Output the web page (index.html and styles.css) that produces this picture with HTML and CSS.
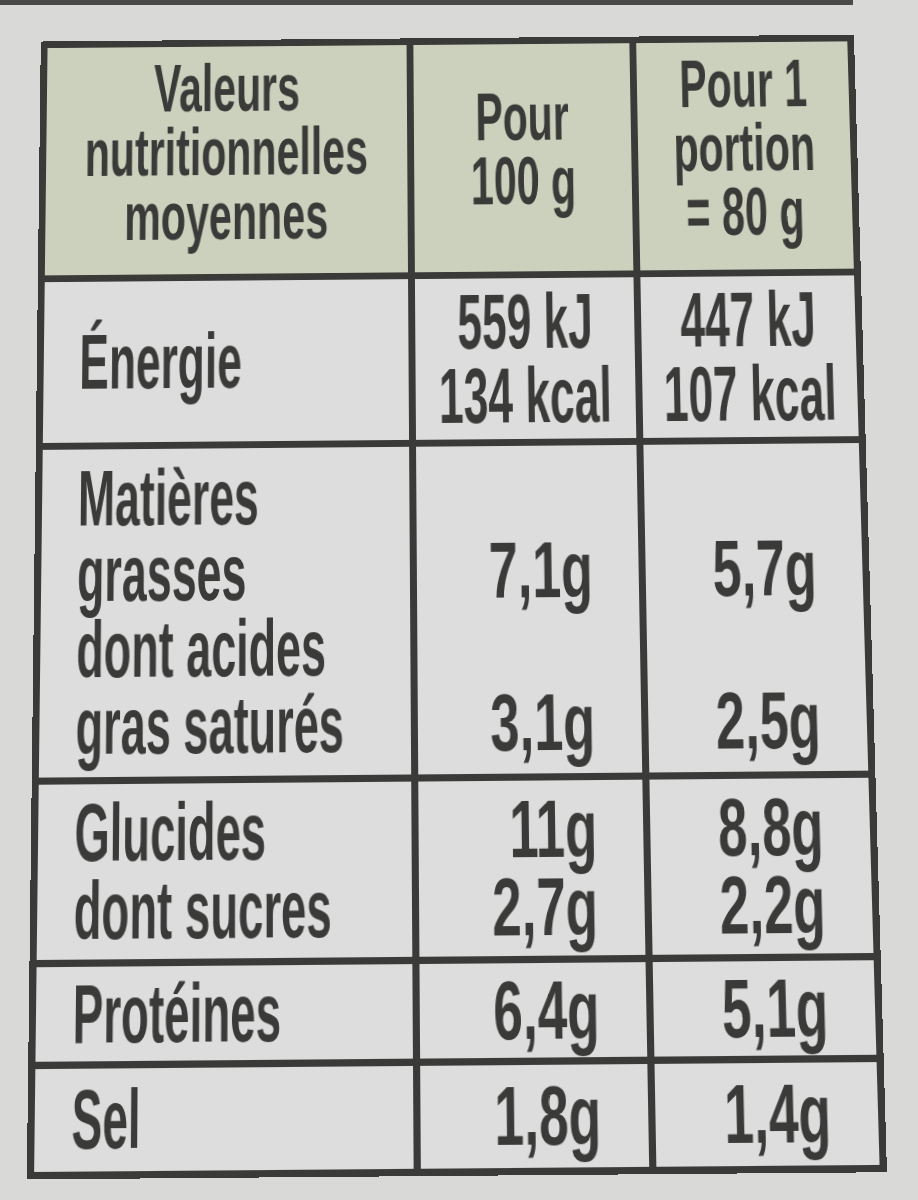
FILE: index.html
```html
<!DOCTYPE html>
<html lang="fr">
<head>
<meta charset="utf-8">
<title>Valeurs nutritionnelles</title>
<link rel="stylesheet" href="styles.css">
</head>
<body>
<div class="topline"></div>
<div class="label-wrap">
  <div class="nutri">
    <div class="cell head"><span>Valeurs</span><span>nutritionnelles</span><span>moyennes</span></div>
    <div class="cell head"><span>Pour</span><span>100 g</span></div>
    <div class="cell head"><span>Pour 1</span><span>portion</span><span>= 80 g</span></div>

    <div class="cell name"><span>Énergie</span></div>
    <div class="cell val center"><span>559 kJ</span><span>134 kcal</span></div>
    <div class="cell val center"><span>447 kJ</span><span>107 kcal</span></div>

    <div class="cell name"><span>Matières</span><span>grasses</span><span>dont acides</span><span>gras saturés</span></div>
    <div class="cell val"><span class="blank">&nbsp;</span><span>7,1g</span><span class="blank">&nbsp;</span><span>3,1g</span></div>
    <div class="cell val"><span class="blank">&nbsp;</span><span>5,7g</span><span class="blank">&nbsp;</span><span>2,5g</span></div>

    <div class="cell name"><span>Glucides</span><span>dont sucres</span></div>
    <div class="cell val"><span>11g</span><span>2,7g</span></div>
    <div class="cell val"><span>8,8g</span><span>2,2g</span></div>

    <div class="cell name"><span>Protéines</span></div>
    <div class="cell val"><span>6,4g</span></div>
    <div class="cell val"><span>5,1g</span></div>

    <div class="cell name"><span>Sel</span></div>
    <div class="cell val"><span>1,8g</span></div>
    <div class="cell val"><span>1,4g</span></div>
  </div>
</div>
</body>
</html>
```
FILE: styles.css
```css
* {
  box-sizing: border-box;
}

html,
body {
  margin: 0;
}

body {
  width: 918px;
  height: 1200px;
  overflow: hidden;
  background: #d9dad8;
  color: #3a3a39;
  font-family: "Liberation Sans", Arial, sans-serif;
  font-weight: 700;
}

.topline {
  width: 853px;
  height: 5px;
  background: #4a4a48;
}

.label-wrap {
  padding: 16px 0 0 34px;
}

.nutri {
  width: 836px;
  display: grid;
  grid-template-columns: 369px 222px 217px;
  grid-template-rows: 238px 165px 328px 171px 91px 98px;
  gap: 7px;
  padding: 7px;
  background: #3a3a38;
  transform: perspective(1500px) rotate(-0.48deg) rotateX(4.24deg);
}

.cell {
  display: flex;
  flex-direction: column;
  justify-content: center;
  background: #dcdddc;
  font-size: 80px;
  line-height: 76px;
  min-width: 0;
}

.cell span {
  display: block;
  width: max-content;
  white-space: nowrap;
  transform: scaleX(0.56);
}

.head {
  align-items: center;
  padding-bottom: 16px;
  background: #cbd1bd;
  font-size: 70px;
  line-height: 67px;
}

.head span {
  transform: scaleX(0.6);
  transform-origin: center;
}

.name {
  align-items: flex-start;
  padding-left: 36px;
}

.name span {
  transform-origin: left center;
}

.val {
  align-items: flex-end;
  padding-right: 46px;
}

.val span {
  transform: scaleX(0.65);
  transform-origin: right center;
}

.val.center {
  align-items: center;
  padding-right: 0;
}

.val.center span {
  transform: scaleX(0.56);
  transform-origin: center;
}
```
